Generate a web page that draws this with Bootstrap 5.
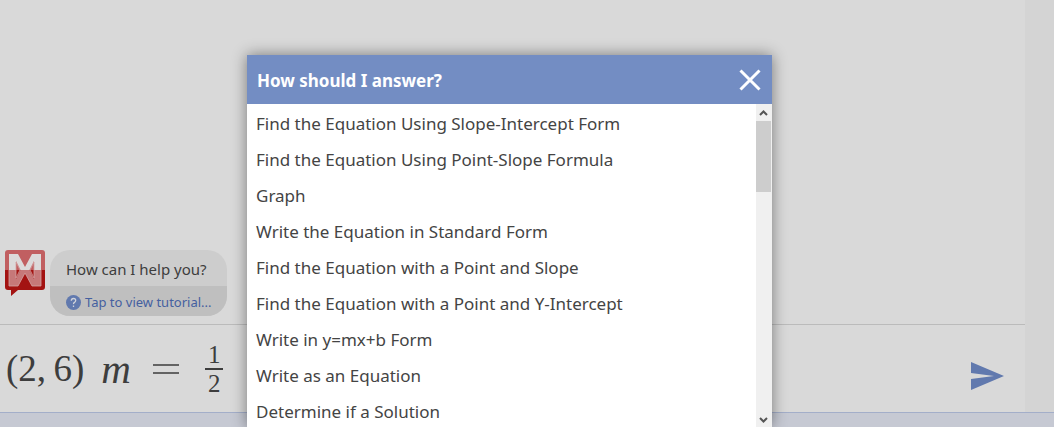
<!DOCTYPE html>
<html lang="en">
<head>
<meta charset="utf-8">
<meta name="viewport" content="width=device-width, initial-scale=1">
<title>How should I answer?</title>
<link href="https://cdn.jsdelivr.net/npm/bootstrap@5.3.0/dist/css/bootstrap.min.css" rel="stylesheet">
<style>
  body { font-family: "Noto Sans", "Open Sans", sans-serif; background: #d9d9d9; color: #3d3d3d; }
  .gutter { width: 29px; background: #d4d4d4; }
  .chat { padding: 0 0 8px 5px; }
  .message { gap: 5px; }
  .bubble { border-radius: 20px; background: #cdcdcd; overflow: hidden; width: 177px; }
  .bubble-text { font-size: 15px; line-height: 20px; padding: 9px 16px 7px; }
  .bubble-link { font-size: 13px; line-height: 20px; padding: 6px 0 4px 16px; gap: 4px; background: #bfbfbf; color: #4560a0; }
  .entry { height: 88px; border-top: 1px solid #bbb; padding: 0 21px 0 6px; }
  .send { margin-top: 14px; }
  .formula { font-family: "Liberation Serif", serif; font-size: 37px; line-height: 48px; gap: 22px; }
  .formula .variable { font-size: 41px; margin-left: -5px; }
  .formula .fraction { font-size: 25px; line-height: 27px; margin-left: 4px; }
  .formula .numerator { border-bottom: 2px solid #3d3d3d; padding: 0 3px; }
  .footer-strip { height: 15px; background: #c6c9d3; border-top: 1px solid #a3aec9; }
  .overlay { padding: 55px 35px 0 0; }
  .answer-dialog { width: 525px; background: #fff; box-shadow: 0 0 14px rgba(0, 0, 0, .45); }
  .answer-head { height: 49px; background: #738dc3; color: #fff; padding: 2px 10px 0; }
  .answer-head h1 { font-size: 17px; line-height: 24px; }
  .answer-head button { margin-bottom: 2px; }
  .answer-list { padding-top: 2px; min-width: 0; }
  .answer-list button { display: block; width: 100%; border: 0; background: none; text-align: left; color: #444; font-size: 17px; line-height: 36px; padding: 0 9px; white-space: nowrap; }
  .answer-list button:hover { background: #eef1f8; }
  .scroll-rail { width: 16px; background: #f0f0f0; }
  .scroll-rail svg { height: 17px; width: 15px; }
  .scroll-thumb { height: 71px; width: 15px; background: #cdcdcd; }
</style>
</head>
<body class="vh-100 overflow-hidden position-relative">
<div class="d-flex flex-column h-100">
  <div class="d-flex flex-fill">
    <main class="d-flex flex-column flex-fill">
      <div class="chat d-flex flex-fill align-items-end">
        <div class="message d-flex align-items-start">
          <svg class="flex-shrink-0" width="40" height="46" viewBox="0 0 40 46" role="img" aria-label="Mathway">
            <path d="M3 0H37Q40 0 40 3V20H0V3Q0 0 3 0Z" fill="#c15f61"/>
            <path d="M0 20H40V37Q40 40 37 40H13L6 46V40H3Q0 40 0 37Z" fill="#a31312"/>
            <path d="M4 4H13L20 17L27 4H36V20H29V11L24.500 20H15.500L11 11V20H4Z" fill="#dcdada"/>
            <path d="M4 20H11V29L15.500 20H24.500L29 29V20H36V36H27L20 23L13 36H4Z" fill="#c67879"/>
            <path d="M4 20V36H13L20 23L27 36H36V20M11 12V28L15 20ZM29 12V28L25 20Z" fill="none" stroke="#d3a3a3" stroke-width=".8"/>
          </svg>
          <div class="bubble">
            <div class="bubble-text">How can I help you?</div>
            <a class="bubble-link d-flex align-items-center text-decoration-none" href="#tutorial">
              <svg width="15" height="15" viewBox="0 0 15 15" aria-hidden="true">
                <circle cx="7.500" cy="7.500" r="7.500" fill="#6179ae"/>
                <path d="M5.300 5.800Q5.300 3.500 7.500 3.500T9.700 5.600Q9.700 6.700 8.500 7.400T7.500 9.200M7.500 10.400V11.900" fill="none" stroke="#cfd2da" stroke-width="1.300"/>
              </svg>
              <span>Tap to view tutorial...</span>
            </a>
          </div>
        </div>
      </div>
      <div class="entry d-flex align-items-center justify-content-between">
        <div class="formula d-flex align-items-center">
          <span>(2,&thinsp;6)</span>
          <i class="variable">m</i>
          <svg width="26" height="12" viewBox="0 0 26 12" role="img" aria-label="equals"><path d="M0 2H26M0 10H26" stroke="#3d3d3d" stroke-width="1.500"/></svg>
          <span class="fraction d-flex flex-column align-items-center">
            <span class="numerator">1</span>
            <span>2</span>
          </span>
        </div>
        <button class="send btn p-0 border-0" type="button" aria-label="Send">
          <svg class="d-block" width="33" height="28" viewBox="0 0 33 28" aria-hidden="true"><path d="M0 0L33 14L0 28V17L23 14L0 11Z" fill="#6179ae"/></svg>
        </button>
      </div>
    </main>
    <div class="gutter"></div>
  </div>
  <div class="footer-strip"></div>
</div>

<div class="overlay position-absolute top-0 start-0 w-100 h-100 d-flex justify-content-center">
  <section class="answer-dialog d-flex flex-column" role="dialog" aria-labelledby="answer-title">
    <header class="answer-head d-flex align-items-center justify-content-between flex-shrink-0">
      <h1 id="answer-title" class="fw-bold m-0">How should I answer?</h1>
      <button class="btn p-0 border-0" type="button" aria-label="Close">
        <svg class="d-block" width="24" height="22" viewBox="0 0 24 22" aria-hidden="true"><path d="M2.500 1.500L21.500 20.500M21.500 1.500L2.500 20.500" stroke="#fff" stroke-width="3"/></svg>
      </button>
    </header>
    <div class="d-flex flex-fill overflow-hidden">
      <div class="answer-list flex-fill overflow-hidden">
        <button type="button">Find the Equation Using Slope-Intercept Form</button>
        <button type="button">Find the Equation Using Point-Slope Formula</button>
        <button type="button">Graph</button>
        <button type="button">Write the Equation in Standard Form</button>
        <button type="button">Find the Equation with a Point and Slope</button>
        <button type="button">Find the Equation with a Point and Y-Intercept</button>
        <button type="button">Write in y=mx+b Form</button>
        <button type="button">Write as an Equation</button>
        <button type="button">Determine if a Solution</button>
      </div>
      <div class="scroll-rail d-flex flex-column" aria-hidden="true">
        <svg viewBox="0 0 15 17"><path d="M4 11L7.500 7.500L11 11" fill="none" stroke="#555" stroke-width="2"/></svg>
        <div class="scroll-thumb"></div>
        <svg class="mt-auto" viewBox="0 0 15 17"><path d="M4 8L7.500 11.500L11 8" fill="none" stroke="#555" stroke-width="2"/></svg>
      </div>
    </div>
  </section>
</div>
<script src="https://cdn.jsdelivr.net/npm/bootstrap@5.3.0/dist/js/bootstrap.bundle.min.js"></script>
</body>
</html>
